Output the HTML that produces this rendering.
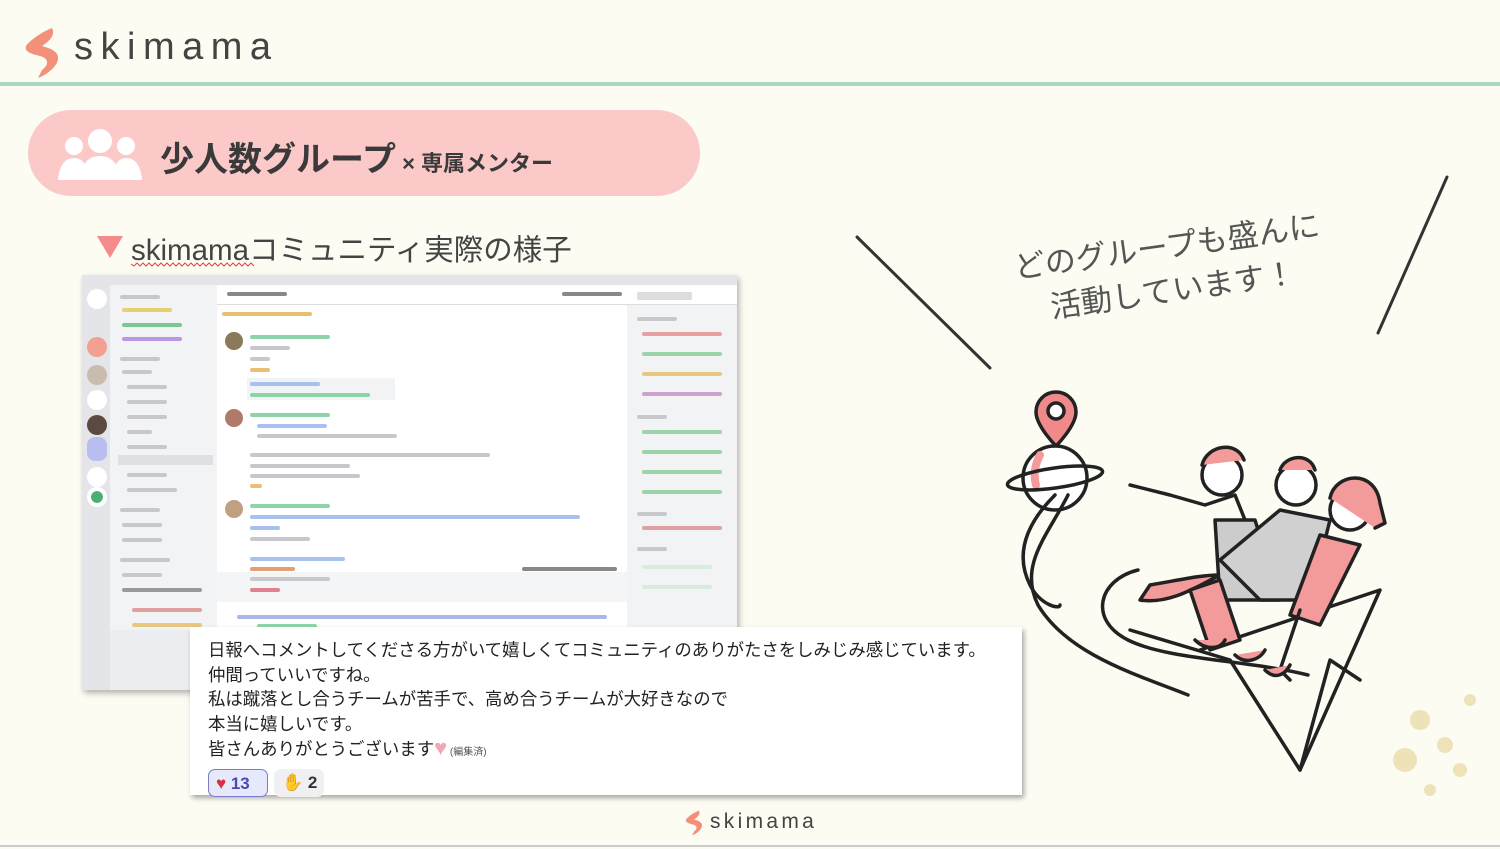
<!DOCTYPE html>
<html><head><meta charset="utf-8"><style>
*{margin:0;padding:0;box-sizing:border-box}
body{width:1500px;height:849px;background:#fdfcf3;position:relative;overflow:hidden;font-family:"Liberation Sans","Noto Sans CJK JP",sans-serif;color:#333}
.abs{position:absolute}
.b{position:absolute;height:4px;border-radius:2px;background:#c8c8cc}
</style></head><body>
<svg class="abs" style="left:22px;top:26px" width="44" height="54" viewBox="0 0 44 54"><path d="M30 2 C20 6 8 14 4 20 C2 26 10 28 18 30 C26 32 28 38 20 44 L16 52 C26 48 36 40 36 32 C36 24 26 22 20 20 C26 16 34 10 30 2Z" fill="#f2907a"/></svg>
<div class="abs" style="left:74px;top:26px;font-size:38px;letter-spacing:7.5px;color:#444">skimama</div>
<div class="abs" style="left:0;top:82px;width:1500px;height:4px;background:#a9d7c3"></div>
<div class="abs" style="left:28px;top:110px;width:672px;height:86px;border-radius:43px;background:#fbc9c8"></div>
<svg class="abs" style="left:58px;top:128px" width="84" height="52" viewBox="0 0 84 52"><g fill="#fff"><circle cx="16" cy="18" r="9"/><path d="M0 52 Q2 30 16 30 Q30 30 30 52Z"/><circle cx="68" cy="18" r="9"/><path d="M54 52 Q56 30 68 30 Q82 30 84 52Z"/><circle cx="42" cy="13" r="12"/><path d="M22 52 Q24 28 42 28 Q60 28 62 52Z"/></g></svg>
<div class="abs" style="left:160px;top:132px;font-size:34px;font-weight:bold;color:#3a3a3a">少人数グループ<span style="font-size:22px"> × 専属メンター</span></div>
<div class="abs" style="left:97px;top:236px;width:0;height:0;border-left:13px solid transparent;border-right:13px solid transparent;border-top:22px solid #f48a8a"></div>
<div class="abs" style="left:131px;top:227px;font-size:29.5px;color:#444">skimamaコミュニティ実際の様子</div>
<svg class="abs" style="left:131px;top:262px" width="124" height="5"><path d="M0 2 L3 4 L6 1 L9 4 L12 1 L15 4 L18 1 L21 4 L24 1 L27 4 L30 1 L33 4 L36 1 L39 4 L42 1 L45 4 L48 1 L51 4 L54 1 L57 4 L60 1 L63 4 L66 1 L69 4 L72 1 L75 4 L78 1 L81 4 L84 1 L87 4 L90 1 L93 4 L96 1 L99 4 L102 1 L105 4 L108 1 L111 4 L114 1 L117 4 L120 1 L123 4" stroke="#d44" fill="none" stroke-width="1"/></svg>
<!-- discord screenshot -->
<div class="abs" style="left:82px;top:275px;width:655px;height:415px;background:#fff;box-shadow:2px 3px 6px rgba(0,0,0,.3);overflow:hidden">
 <div class="abs" style="left:0;top:0;width:655px;height:10px;background:#e3e5e8"></div>
 <div class="abs" style="left:0;top:10px;width:28px;height:405px;background:#e3e5e8"></div>
 <div class="abs" style="left:28px;top:10px;width:107px;height:405px;background:#f2f3f5"></div>
 <div class="abs" style="left:545px;top:30px;width:110px;height:385px;background:#f2f3f5"></div>
 <div class="abs" style="left:135px;top:10px;width:520px;height:20px;border-bottom:1px solid #ddd"></div>
 <div class="abs" style="left:5px;top:14px;width:20px;height:20px;border-radius:50%;background:#fff"></div>
 <div class="abs" style="left:5px;top:62px;width:20px;height:20px;border-radius:50%;background:#f2a090"></div>
 <div class="abs" style="left:5px;top:90px;width:20px;height:20px;border-radius:50%;background:#c9bcae"></div>
 <div class="abs" style="left:5px;top:115px;width:20px;height:20px;border-radius:50%;background:#fff"></div>
 <div class="abs" style="left:5px;top:140px;width:20px;height:20px;border-radius:50%;background:#5a4a40"></div>
 <div class="abs" style="left:5px;top:162px;width:20px;height:24px;border-radius:8px;background:#b8bff0"></div>
 <div class="abs" style="left:5px;top:192px;width:20px;height:20px;border-radius:50%;background:#fff"></div>
 <div class="abs" style="left:5px;top:212px;width:20px;height:20px;border-radius:50%;background:#fff;border:4px solid #fff;box-shadow:inset 0 0 0 6px #4caf70"></div>
 <div class="b" style="left:38px;top:20px;width:40px"></div>
 <div class="b" style="left:40px;top:33px;width:50px;background:#e8d070"></div>
 <div class="b" style="left:40px;top:48px;width:60px;background:#7ac890"></div>
 <div class="b" style="left:40px;top:62px;width:60px;background:#b898e0"></div>
 <div class="b" style="left:38px;top:82px;width:40px"></div>
 <div class="b" style="left:40px;top:95px;width:30px"></div>
 <div class="b" style="left:45px;top:110px;width:40px"></div>
 <div class="b" style="left:45px;top:125px;width:40px"></div>
 <div class="b" style="left:45px;top:140px;width:40px"></div>
 <div class="b" style="left:45px;top:155px;width:25px"></div>
 <div class="b" style="left:45px;top:170px;width:40px"></div>
 <div class="abs" style="left:36px;top:180px;width:95px;height:10px;background:#dfe0e3"></div>
 <div class="b" style="left:45px;top:198px;width:40px"></div>
 <div class="b" style="left:45px;top:213px;width:50px"></div>
 <div class="b" style="left:38px;top:233px;width:40px"></div>
 <div class="b" style="left:40px;top:248px;width:40px"></div>
 <div class="b" style="left:40px;top:263px;width:40px"></div>
 <div class="b" style="left:38px;top:283px;width:50px"></div>
 <div class="b" style="left:40px;top:298px;width:40px"></div>
 <div class="b" style="left:40px;top:313px;width:80px;background:#999"></div>
 <div class="b" style="left:50px;top:333px;width:70px;background:#e0a0a0"></div>
 <div class="b" style="left:50px;top:348px;width:70px;background:#e8c880"></div>
 <div class="abs" style="left:28px;top:355px;width:107px;height:60px;background:#ebedf0"></div>
 <div class="b" style="left:145px;top:17px;width:60px;background:#888"></div>
 <div class="b" style="left:480px;top:17px;width:60px;background:#888"></div>
 <div class="b" style="left:555px;top:17px;width:55px;background:#ddd;height:8px"></div>
 <div class="b" style="left:140px;top:37px;width:90px;background:#e8c070"></div>
 <div class="abs" style="left:143px;top:57px;width:18px;height:18px;border-radius:50%;background:#8a7a5a"></div>
 <div class="b" style="left:168px;top:60px;width:80px;background:#8fd4a8"></div>
 <div class="b" style="left:168px;top:71px;width:40px"></div>
 <div class="b" style="left:168px;top:82px;width:20px"></div>
 <div class="b" style="left:168px;top:93px;width:20px;background:#e8c070"></div>
 <div class="abs" style="left:165px;top:103px;width:148px;height:22px;background:#f2f3f5"></div>
 <div class="b" style="left:168px;top:107px;width:70px;background:#a8c0f0"></div>
 <div class="b" style="left:168px;top:118px;width:120px;background:#8fd4a8"></div>
 <div class="abs" style="left:143px;top:134px;width:18px;height:18px;border-radius:50%;background:#b07a6a"></div>
 <div class="b" style="left:168px;top:138px;width:80px;background:#8fd4a8"></div>
 <div class="b" style="left:175px;top:149px;width:70px;background:#a8c0f0"></div>
 <div class="b" style="left:175px;top:159px;width:140px"></div>
 <div class="b" style="left:168px;top:178px;width:240px"></div>
 <div class="b" style="left:168px;top:189px;width:100px"></div>
 <div class="b" style="left:168px;top:199px;width:110px"></div>
 <div class="b" style="left:168px;top:209px;width:12px;background:#e8c070"></div>
 <div class="abs" style="left:143px;top:225px;width:18px;height:18px;border-radius:50%;background:#c0a080"></div>
 <div class="b" style="left:168px;top:229px;width:80px;background:#8fd4a8"></div>
 <div class="b" style="left:168px;top:240px;width:330px;background:#a8c0f0"></div>
 <div class="b" style="left:168px;top:251px;width:30px;background:#a8c0f0"></div>
 <div class="b" style="left:168px;top:262px;width:60px"></div>
 <div class="b" style="left:168px;top:282px;width:95px;background:#a8c0f0"></div>
 <div class="b" style="left:168px;top:292px;width:45px;background:#e0a070"></div>
 <div class="abs" style="left:135px;top:297px;width:410px;height:30px;background:#f4f5f6"></div>
 <div class="b" style="left:168px;top:302px;width:80px"></div>
 <div class="b" style="left:168px;top:313px;width:30px;background:#e08090"></div>
 <div class="b" style="left:440px;top:292px;width:95px;background:#888"></div>
 <div class="b" style="left:155px;top:340px;width:370px;background:#a8b8e8"></div>
 <div class="b" style="left:175px;top:349px;width:60px;background:#8fd4a8"></div>
 <div class="b" style="left:555px;top:42px;width:40px"></div>
 <div class="b" style="left:560px;top:57px;width:80px;background:#e8a0a0"></div>
 <div class="b" style="left:560px;top:77px;width:80px;background:#9ad4a8"></div>
 <div class="b" style="left:560px;top:97px;width:80px;background:#e8c880"></div>
 <div class="b" style="left:560px;top:117px;width:80px;background:#d0a0d0"></div>
 <div class="b" style="left:555px;top:140px;width:30px"></div>
 <div class="b" style="left:560px;top:155px;width:80px;background:#9ad4a8"></div>
 <div class="b" style="left:560px;top:175px;width:80px;background:#9ad4a8"></div>
 <div class="b" style="left:560px;top:195px;width:80px;background:#9ad4a8"></div>
 <div class="b" style="left:560px;top:215px;width:80px;background:#9ad4a8"></div>
 <div class="b" style="left:555px;top:237px;width:30px"></div>
 <div class="b" style="left:560px;top:251px;width:80px;background:#e0a0a0"></div>
 <div class="b" style="left:555px;top:272px;width:30px"></div>
 <div class="b" style="left:560px;top:290px;width:70px;background:#d8ecdc"></div>
 <div class="b" style="left:560px;top:310px;width:70px;background:#d8ecdc"></div>
</div>
<div class="abs" style="left:190px;top:627px;width:832px;height:168px;background:#fff;box-shadow:2px 3px 5px rgba(0,0,0,.35);padding:11px 0 0 18px;font-size:17.4px;line-height:24.6px;color:#222">
日報へコメントしてくださる方がいて嬉しくてコミュニティのありがたさをしみじみ感じています。<br>仲間っていいですね。<br>私は蹴落とし合うチームが苦手で、高め合うチームが大好きなので<br>本当に嬉しいです。<br>皆さんありがとうございます<span style="color:#f0a8b8;font-size:22px">♥</span><span style="font-size:10px;color:#555"> (編集済)</span>
<div style="margin-top:3px;display:flex;gap:6px">
<div style="border:1px solid #7a7ad0;background:#e6e8fb;border-radius:7px;width:60px;height:28px;font-size:17px;font-weight:bold;color:#4a4ab0;padding:2px 0 0 7px"><span style="color:#d43040">♥</span> 13</div>
<div style="background:#f0f0f2;border-radius:7px;width:50px;height:28px;font-size:17px;font-weight:bold;color:#333;padding:2px 0 0 8px"><span style="color:#f0c040">✋</span> 2</div>
</div></div>
<svg class="abs" style="left:684px;top:809px" width="22" height="28" viewBox="0 0 44 54"><path d="M30 2 C20 6 8 14 4 20 C2 26 10 28 18 30 C26 32 28 38 20 44 L16 52 C26 48 36 40 36 32 C36 24 26 22 20 20 C26 16 34 10 30 2Z" fill="#f2907a"/></svg>
<div class="abs" style="left:710px;top:810px;font-size:21px;letter-spacing:3.3px;color:#444">skimama</div>
<div class="abs" style="left:0;top:845px;width:1500px;height:2px;background:#ccc"></div>
<div class="abs" style="left:990px;top:225px;width:360px;text-align:center;font-size:31px;line-height:44px;color:#555;transform:rotate(-8deg)">どのグループも盛んに<br>活動しています！</div>
<svg class="abs" style="left:0;top:0" width="1500" height="849">
<g stroke="#333" stroke-width="3" fill="none" stroke-linecap="round">
<line x1="857" y1="237" x2="990" y2="368"/><line x1="1447" y1="177" x2="1378" y2="333"/>
</g>
<g stroke="#222" stroke-width="3.5" fill="none" stroke-linecap="round" stroke-linejoin="round">
<path d="M1056 392 a20 20 0 0 1 20 20 c0 14 -20 34 -20 34 c0 0 -20 -20 -20 -34 a20 20 0 0 1 20 -20z" fill="#f08a8a"/>
<circle cx="1056" cy="411" r="8" fill="#fff"/>
<circle cx="1055" cy="478" r="32" fill="#fff"/>
<path d="M1040 455 q-8 15 -4 30" stroke="#f39a9a" stroke-width="8"/>
<ellipse cx="1055" cy="478" rx="48" ry="10" transform="rotate(-8 1055 478)"/>
<path d="M1055 495 c-30 30 -40 60 -25 90 c10 20 30 25 30 20"/>
<path d="M1068 495 c-20 40 -50 70 -30 110 c30 50 100 70 150 90"/>
<path d="M1138 570 c-40 10 -50 50 -10 70 c40 20 120 20 180 35"/>
<path d="M1130 630 l100 30 l70 110 l80 -180 l-180 60"/>
<path d="M1300 770 l30 -110 l30 20"/>
<path d="M1150 585 c30 -5 50 -10 70 -10 c-20 10 -50 30 -80 25z" fill="#f39a9a"/>
<circle cx="1222" cy="475" r="20" fill="#fff"/>
<path d="M1202 465 c5 -20 35 -25 42 -5" fill="#f39a9a"/>
<path d="M1130 485 l40 10 l35 10 l30 -10 l20 50 l-25 20"/>
<path d="M1215 520 l40 0 l25 80 l-60 0 z" fill="#ccc"/>
<circle cx="1296" cy="485" r="20" fill="#fff"/>
<path d="M1280 470 c5 -15 30 -18 35 0" fill="#f39a9a"/>
<path d="M1220 560 l60 -50 l50 10 l-20 80 l-50 0z" fill="#d0d0d0"/>
<path d="M1190 590 l30 -10 l20 60 l-30 10z" fill="#f39a9a"/>
<circle cx="1350" cy="510" r="20" fill="#fff"/>
<path d="M1330 498 c5 -25 45 -30 50 5 l5 20 l-10 5" fill="#f39a9a"/>
<path d="M1320 535 l40 10 l-40 80 l-30 -10z" fill="#f39a9a"/>
<path d="M1300 610 l-20 60 l10 10"/>
<path d="M1195 640 c10 10 25 10 30 0" fill="#f39a9a"/>
<path d="M1235 655 c10 10 25 5 30 -5" fill="#f39a9a"/>
<path d="M1265 670 c10 10 20 5 25 -5" fill="#f39a9a"/>
</g>
<g fill="#e8d9a0" opacity=".7">
<circle cx="1420" cy="720" r="10"/><circle cx="1445" cy="745" r="8"/><circle cx="1405" cy="760" r="12"/><circle cx="1460" cy="770" r="7"/><circle cx="1430" cy="790" r="6"/><circle cx="1470" cy="700" r="6"/>
</g>
</svg>
</body></html>
